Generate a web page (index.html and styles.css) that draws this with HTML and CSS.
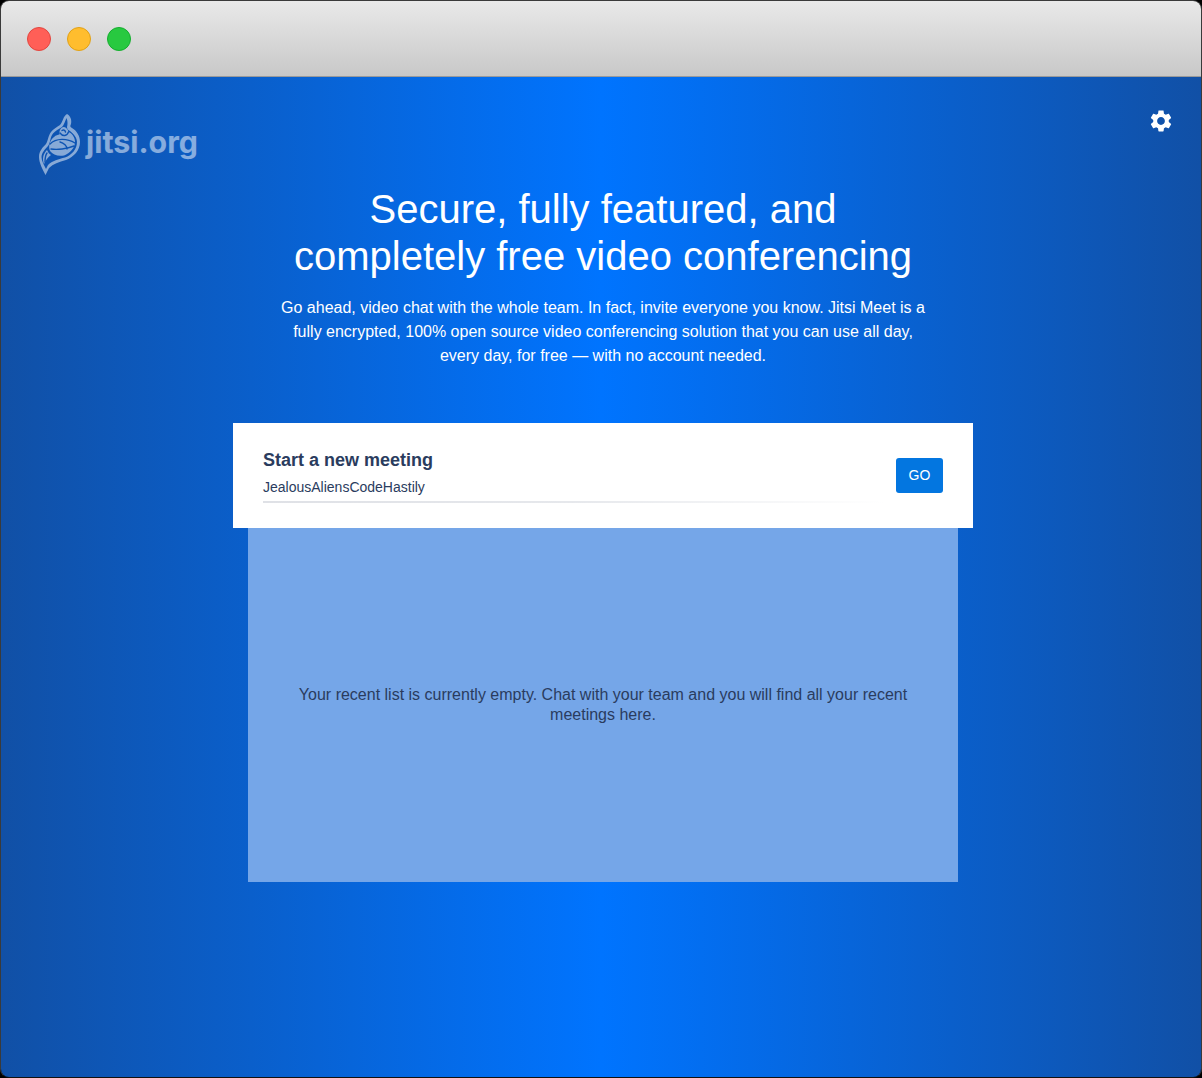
FILE: index.html
```html
<!DOCTYPE html>
<html>
<head>
<title>Jitsi Meet</title>
<meta charset="utf-8">
<link rel="stylesheet" href="styles.css">
</head>
<body>

<div class="window">
	<div class="titlebar">
		<span class="light red"></span>
		<span class="light yellow"></span>
		<span class="light green"></span>
	</div>

	<div class="welcome">
		<a class="watermark">
			<svg class="logo" width="44" height="64" viewBox="0 0 44 64">
				<path class="logo-shape" d="M29 1C32.500 3 34 7 33 11C32 13 32 14 34 15C39 18 42 23 42 29C42 37 36 44 28 47C21 49 15 51 11 55L7.500 62C5 57 1 50 1 44C1 38 5 34 8 31C10 28 10 23 13 19C15 16 19 14 22 12C25 9 25 3 29 1Z"/>
				<path class="logo-gap" d="M28.500 5C30 8 29.500 12 29 14C29 16 30 17 32 18C36 21 39 25 39 29C39 36 34 42 27 44.500C21 46 14 48 10 52L8 56C6 52 3.500 48 3.500 44C3.500 40 7 36 10 33C12.500 30 12 24 15 20.500C17 18 21 16 24 14C26 12 27 8 28.500 5Z"/>
				<path class="logo-shape" d="M25 14C28 14 30 16 30.500 19C33.500 20 37 24 37 29C37 35 32 40 26 42.500C20 43.500 15 42 12 38C10 33 12 27 16 24C18 22 20 22 21.500 21.500C21 18 22 15.500 25 14Z"/>
				<path class="logo-line" d="M22 20C25 24 29 23 30.500 19"/>
				<path class="logo-line" d="M24 17.500C25.500 16.500 27 17 27.500 19"/>
				<path class="logo-line" d="M12 31C18 25 29 25 37 30"/>
				<path class="logo-line" d="M13 36C19 37 29 36 36 33"/>
				<path class="logo-line" d="M22 29C26 30 29 33 29 36"/>
				<path class="logo-shape" d="M9 37C5 41 4 46 6 51C8 47 10 44 13 42C11 41 10 39 9 37Z"/>
				<path class="logo-line" d="M9 40C7 43 7 46 7 49"/>
			</svg>
			<span class="logo-text">jitsi.org</span>
		</a>

		<svg class="settings" width="26" height="26" viewBox="0 0 24 24">
			<path d="M19.140 12.940c.04-.3.06-.61.06-.94 0-.32-.02-.64-.07-.94l2.030-1.580c.18-.14.23-.41.12-.61l-1.920-3.320c-.12-.22-.37-.29-.59-.22l-2.390.96c-.5-.38-1.030-.7-1.620-.94l-.36-2.540c-.04-.24-.24-.41-.48-.41h-3.840c-.24 0-.43.17-.47.41l-.36 2.540c-.59.24-1.130.57-1.620.94l-2.390-.96c-.22-.08-.47 0-.59.22L2.740 8.870c-.12.21-.08.47.12.61l2.030 1.580c-.05.3-.09.63-.09.94s.02.64.07.94l-2.030 1.580c-.18.14-.23.41-.12.61l1.920 3.320c.12.22.37.29.59.22l2.390-.96c.5.38 1.030.7 1.620.94l.36 2.540c.05.24.24.41.48.41h3.840c.24 0 .44-.17.47-.41l.36-2.540c.59-.24 1.130-.56 1.620-.94l2.390.96c.22.08.47 0 .59-.22l1.920-3.320c.12-.22.07-.47-.12-.61l-2.010-1.580zM12 15.600c-1.980 0-3.600-1.620-3.600-3.600s1.620-3.600 3.600-3.600 3.600 1.620 3.600 3.600-1.620 3.600-3.600 3.600z"/>
		</svg>

		<h1 class="title">Secure, fully featured, and<br>completely free video conferencing</h1>
		<p class="description">Go ahead, video chat with the whole team. In fact, invite everyone you know. Jitsi Meet is a fully encrypted, 100% open source video conferencing solution that you can use all day, every day, for free — with no account needed.</p>

		<div class="entry">
			<div class="entry-form">
				<div class="entry-label">Start a new meeting</div>
				<div class="entry-input">JealousAliensCodeHastily</div>
			</div>
			<button class="go">GO</button>
		</div>

		<div class="recent">
			<div class="recent-empty">Your recent list is currently empty. Chat with your team and you will find all your recent meetings here.</div>
		</div>
	</div>
</div>

</body>
</html>
```

FILE: styles.css
```css
html, body {
  margin: 0;
  height: 100%;
  background: #000;
}

.window {
  box-sizing: border-box;
  height: 1078px;
  display: flex;
  flex-direction: column;
  border: 1px solid #3a3a3a;
  border-bottom-color: #111;
  border-radius: 9px;
  overflow: hidden;
  font-family: "Liberation Sans", Arial, sans-serif;
}

.titlebar {
  height: 75px;
  flex: none;
  display: flex;
  align-items: center;
  gap: 16px;
  padding-left: 26px;
  background: linear-gradient(#e9e9e9, #c8c8c8);
  border-bottom: 1px solid #9a9a9a;
}

.light {
  box-sizing: border-box;
  width: 24px;
  height: 24px;
  border-radius: 50%;
  border: 1px solid;
}
.red {
  background: #ff5f57;
  border-color: #e2463f;
}
.yellow {
  background: #ffbd2e;
  border-color: #e1a116;
}
.green {
  background: #28c940;
  border-color: #14ae2e;
}

.welcome {
  position: relative;
  flex: 1;
  display: flex;
  flex-direction: column;
  align-items: center;
  padding: 109px 0 0 4px;
  background: linear-gradient(90deg, #1150a6 0%, #0074ff 50%, #1150a6 100%);
  color: #fff;
}

.watermark {
  position: absolute;
  top: 36px;
  left: 37px;
  display: flex;
  opacity: .5;
}

.logo-shape {
  fill: #fff;
  stroke: none;
}

.logo-gap {
  fill: #0d55b8;
}

.logo-line {
  fill: none;
  stroke: #0d55b8;
  stroke-width: 1.400;
  stroke-linecap: round;
}

.logo-text {
  font-family: Inter, sans-serif;
  font-weight: 700;
  font-size: 30.300px;
  line-height: 44px;
  margin: 7px 0 0 4px;
}

.settings {
  position: absolute;
  top: 31px;
  right: 27px;
  fill: #fff;
}

.title {
  margin: 0;
  font-weight: 400;
  font-size: 40px;
  line-height: 47px;
  text-align: center;
}

.description {
  width: 650px;
  margin: 16px 0 0;
  font-size: 16px;
  line-height: 24px;
  text-align: center;
}

.entry {
  box-sizing: border-box;
  width: 740px;
  height: 105px;
  margin-top: 55px;
  display: flex;
  align-items: center;
  padding: 0 30px;
  background: #fff;
  color: #2a3c5e;
}

.entry-form {
  flex: 1;
  margin: 4px 13px 0 0;
}

.entry-label {
  font-size: 18px;
  font-weight: 700;
  line-height: 24px;
  margin-top: -4px;
}

.entry-input {
  margin-top: 7px;
  padding-bottom: 6px;
  font-size: 14px;
  line-height: 16px;
  border-bottom: 2px solid;
  border-image: linear-gradient(90deg, #dfe1e6 0%, #e6e8ec 50%, #fff 100%) 1;
}

.go {
  width: 47px;
  height: 35px;
  padding: 0 0 2px;
  border: 0;
  border-radius: 3px;
  background: #0376e0;
  color: #fff;
  font-family: inherit;
  font-size: 14px;
}

.recent {
  box-sizing: border-box;
  width: 710px;
  height: 354px;
  display: flex;
  align-items: center;
  justify-content: center;
  padding: 0 45px;
  background: #75a6e8;
  color: #2a3c5e;
}

.recent-empty {
  font-size: 16px;
  line-height: 20px;
  text-align: center;
}
```
